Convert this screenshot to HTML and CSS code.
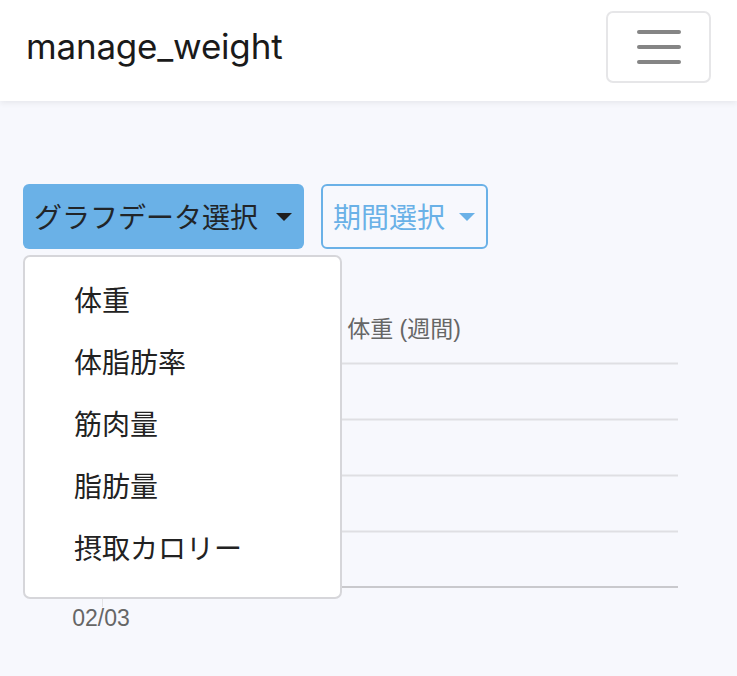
FILE: index.html
```html
<!DOCTYPE html>
<html lang="ja">
<head>
<meta charset="utf-8">
<title>manage_weight</title>
<link rel="stylesheet" href="styles.css">
</head>
<body>
<nav class="navbar">
  <span class="brand">manage_weight</span>
  <button class="toggler" aria-label="menu">
    <span class="bar"></span><span class="bar"></span><span class="bar"></span>
  </button>
</nav>
<main class="main">
  <div class="controls">
    <div class="dropdown">
      <button class="btn btn-primary">グラフデータ選択<span class="caret"></span></button>
      <ul class="menu">
        <li class="menu-item">体重</li>
        <li class="menu-item">体脂肪率</li>
        <li class="menu-item">筋肉量</li>
        <li class="menu-item">脂肪量</li>
        <li class="menu-item">摂取カロリー</li>
      </ul>
    </div>
    <button class="btn btn-outline">期間選択<span class="caret"></span></button>
  </div>
  <div class="chart">
    <svg class="chart-svg" width="737" height="385" viewBox="0 0 737 385">
      <text class="chart-title" x="404" y="82" text-anchor="middle">体重 (週間)</text>
      <line class="grid" x1="102" y1="108.5" x2="678" y2="108.5"/>
      <line class="grid" x1="102" y1="164.5" x2="678" y2="164.5"/>
      <line class="grid" x1="102" y1="220.5" x2="678" y2="220.5"/>
      <line class="grid" x1="102" y1="276.5" x2="678" y2="276.5"/>
      <line class="axis" x1="102" y1="332" x2="678" y2="332"/>
      <line class="tick" x1="102.5" y1="100" x2="102.5" y2="352"/>
      <text class="tick-label" x="101" y="371" text-anchor="middle">02/03</text>
    </svg>
  </div>
</main>
</body>
</html>
```
FILE: styles.css
```css
* { box-sizing: border-box; }
html, body { margin: 0; padding: 0; }
body {
  width: 737px;
  height: 676px;
  overflow: hidden;
  background: #f7f8fd;
  font-family: Inter, "Noto Sans", "Noto Sans CJK JP", sans-serif;
  color: #212529;
}
.navbar {
  position: relative;
  z-index: 2;
  height: 101px;
  background: #fff;
  box-shadow: 0 2px 6px rgba(0, 0, 0, 0.07);
  display: flex;
  align-items: center;
  justify-content: space-between;
  padding: 0 26px 0 26px;
}
.brand {
  font-size: 35px;
  color: #1a1a1a;
  letter-spacing: -0.2px;
  margin-top: -10px;
}
.toggler {
  width: 105px;
  height: 72px;
  margin-right: 0;
  margin-top: -8px;
  background: #fff;
  border: 2px solid #e6e6e8;
  border-radius: 7px;
  display: flex;
  flex-direction: column;
  align-items: center;
  justify-content: center;
  gap: 11px;
  padding: 0;
}
.bar {
  display: block;
  width: 44px;
  height: 4px;
  border-radius: 2px;
  background: #858585;
}
.main {
  padding: 83px 0 0 23px;
}
.controls {
  display: flex;
  gap: 17px;
  align-items: flex-start;
}
.dropdown { position: relative; }
.btn {
  height: 65px;
  font-family: "Noto Sans CJK JP", sans-serif;
  font-size: 28px;
  white-space: nowrap;
  flex-shrink: 0;
  border-radius: 6px;
  display: flex;
  align-items: center;
  padding: 0 9px 2px 11px;
  cursor: pointer;
}
.btn-primary {
  width: 281px;
  background: #6ab1e7;
  border: none;
  color: #212529;
}
.btn-outline {
  width: 167px;
  background: transparent;
  border: 2px solid #6ab1e7;
  color: #6ab1e7;
  padding: 0 6px 2px 10px;
}
.caret {
  flex-shrink: 0;
  width: 0;
  height: 0;
  margin-left: 14px;
  margin-top: 2px;
  border-top: 8px solid currentColor;
  border-left: 8px solid transparent;
  border-right: 8px solid transparent;
}
.btn-primary .caret { margin-left: 18px; border-top-color: #1e1e1e; }
.menu {
  position: absolute;
  z-index: 3;
  top: 71px;
  left: 0;
  width: 319px;
  height: 344px;
  margin: 0;
  padding: 11px 0 21px;
  list-style: none;
  background: #fff;
  border: 2px solid #d6d6da;
  border-radius: 7px;
}
.menu-item {
  height: 62px;
  line-height: 62px;
  padding-left: 49px;
  font-family: "Noto Sans CJK JP", sans-serif;
  font-size: 28px;
  color: #222;
}
.chart {
  margin: 6px 0 0 -23px;
}
.chart-svg { display: block; }
.chart-title {
  font-family: "Liberation Sans", "Noto Sans CJK JP", sans-serif;
  font-size: 23px;
  fill: #666;
}
.tick-label {
  font-family: "Liberation Sans", sans-serif;
  font-size: 23px;
  fill: #666;
}
.grid { stroke: #dfdfe3; stroke-width: 2; }
.axis { stroke: #c9c9cd; stroke-width: 2; }
.tick { stroke: #e3e3e6; stroke-width: 1; }
```
